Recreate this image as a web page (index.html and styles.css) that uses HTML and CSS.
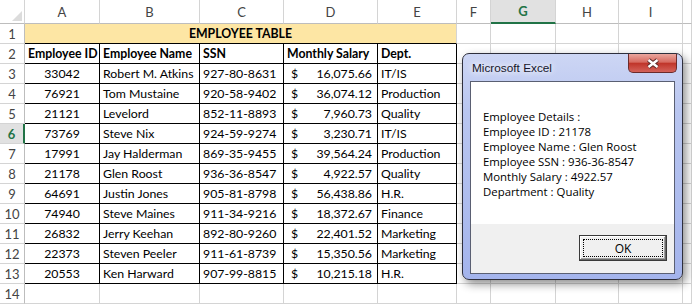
FILE: index.html
```html
<!DOCTYPE html>
<html lang="en">
<head>
    <meta charset="UTF-8">
    <title>Employee Table</title>
    <link rel="stylesheet" href="styles.css">
</head>
<body>

    <div class="sheet">
        <div class="row head-row">
            <div class="corner"><svg width="24" height="23" viewBox="0 0 24 23"><path d="M22 11 L22 21 L12 21 Z" fill="#dcdcdc"/></svg></div>
            <div>A</div><div>B</div><div>C</div><div>D</div><div>E</div>
            <div>F</div><div class="sel-col">G</div><div>H</div><div>I</div><div></div>
        </div>
        <div class="row">
            <div class="rh">1</div>
            <div class="title">EMPLOYEE TABLE</div>
            <div></div><div></div><div></div><div></div><div></div>
        </div>
        <div class="row data heading">
            <div class="rh">2</div>
            <div>Employee ID</div><div>Employee Name</div><div>SSN</div><div>Monthly Salary</div><div>Dept.</div>
            <div></div><div></div><div></div><div></div><div></div>
        </div>
        <div class="row data rec">
            <div class="rh">3</div>
            <div>33042</div><div>Robert M. Atkins</div><div>927-80-8631</div>
            <div class="amt"><span>$</span><span>16,075.66</span></div><div>IT/IS</div>
            <div></div><div></div><div></div><div></div><div></div>
        </div>
        <div class="row data rec">
            <div class="rh">4</div>
            <div>76921</div><div>Tom Mustaine</div><div>920-58-9402</div>
            <div class="amt"><span>$</span><span>36,074.12</span></div><div>Production</div>
            <div></div><div></div><div></div><div></div><div></div>
        </div>
        <div class="row data rec">
            <div class="rh">5</div>
            <div>21121</div><div>Levelord</div><div>852-11-8893</div>
            <div class="amt"><span>$</span><span>7,960.73</span></div><div>Quality</div>
            <div></div><div></div><div></div><div></div><div></div>
        </div>
        <div class="row data rec">
            <div class="rh sel-row">6</div>
            <div>73769</div><div>Steve Nix</div><div>924-59-9274</div>
            <div class="amt"><span>$</span><span>3,230.71</span></div><div>IT/IS</div>
            <div></div><div></div><div></div><div></div><div></div>
        </div>
        <div class="row data rec">
            <div class="rh">7</div>
            <div>17991</div><div>Jay Halderman</div><div>869-35-9455</div>
            <div class="amt"><span>$</span><span>39,564.24</span></div><div>Production</div>
            <div></div><div></div><div></div><div></div><div></div>
        </div>
        <div class="row data rec">
            <div class="rh">8</div>
            <div>21178</div><div>Glen Roost</div><div>936-36-8547</div>
            <div class="amt"><span>$</span><span>4,922.57</span></div><div>Quality</div>
            <div></div><div></div><div></div><div></div><div></div>
        </div>
        <div class="row data rec">
            <div class="rh">9</div>
            <div>64691</div><div>Justin Jones</div><div>905-81-8798</div>
            <div class="amt"><span>$</span><span>56,438.86</span></div><div>H.R.</div>
            <div></div><div></div><div></div><div></div><div></div>
        </div>
        <div class="row data rec">
            <div class="rh">10</div>
            <div>74940</div><div>Steve Maines</div><div>911-34-9216</div>
            <div class="amt"><span>$</span><span>18,372.67</span></div><div>Finance</div>
            <div></div><div></div><div></div><div></div><div></div>
        </div>
        <div class="row data rec">
            <div class="rh">11</div>
            <div>26832</div><div>Jerry Keehan</div><div>892-80-9260</div>
            <div class="amt"><span>$</span><span>22,401.52</span></div><div>Marketing</div>
            <div></div><div></div><div></div><div></div><div></div>
        </div>
        <div class="row data rec">
            <div class="rh">12</div>
            <div>22373</div><div>Steven Peeler</div><div>911-61-8739</div>
            <div class="amt"><span>$</span><span>15,350.56</span></div><div>Marketing</div>
            <div></div><div></div><div></div><div></div><div></div>
        </div>
        <div class="row data rec">
            <div class="rh">13</div>
            <div>20553</div><div>Ken Harward</div><div>907-99-8815</div>
            <div class="amt"><span>$</span><span>10,215.18</span></div><div>H.R.</div>
            <div></div><div></div><div></div><div></div><div></div>
        </div>
        <div class="row">
            <div class="rh">14</div>
            <div></div><div></div><div></div><div></div><div></div>
            <div></div><div></div><div></div><div></div><div></div>
        </div>
    </div>

    <div class="dialog">
        <div class="dlg-title">
            <span>Microsoft Excel</span>
            <div class="close-btn">
                <svg width="16" height="11" viewBox="0 0 16 11">
                    <path d="M3.5 2 L12.5 9 M12.5 2 L3.5 9" stroke="#5a2a2a" stroke-width="4.4"/>
                    <path d="M3.5 2 L12.5 9 M12.5 2 L3.5 9" stroke="#fff" stroke-width="2.4"/>
                </svg>
            </div>
        </div>
        <div class="dlg-panel">
            <div class="dlg-msg">
                <p>Employee Details :</p>
                <p>Employee ID : 21178</p>
                <p>Employee Name : Glen Roost</p>
                <p>Employee SSN : 936-36-8547</p>
                <p>Monthly Salary : 4922.57</p>
                <p>Department : Quality</p>
            </div>
            <div class="dlg-foot">
                <button class="ok-btn"><span>OK</span></button>
            </div>
        </div>
    </div>

</body>
</html>
```

FILE: styles.css
```css
* {
    box-sizing: border-box;
}
body {
    margin: 0;
    width: 692px;
    height: 304px;
    overflow: hidden;
    position: relative;
    background: #fff;
    font-family: Lato, "Liberation Sans", sans-serif;
    font-size: 12.3px;
    color: #000;
}
.sheet {
    display: flex;
    flex-direction: column;
}
.row {
    display: grid;
    grid-template-columns: 25px 75px 100px 84px 94px 79px 34px 65px 63px 64px 9px;
    height: 20px;
}
.row > div {
    border-right: 1px solid #d4d4d4;
    border-bottom: 1px solid #d4d4d4;
    line-height: 20px;
    padding: 0 3px;
    white-space: nowrap;
    overflow: hidden;
}
.head-row {
    height: 24px;
}
.head-row > div {
    text-align: center;
    color: #444;
    font-size: 13px;
    line-height: 24px;
    border-bottom-color: #bdbdbd;
}
.head-row > .corner {
    padding: 0;
    line-height: 0;
}
.row > .rh {
    text-align: center;
    color: #444;
    font-size: 13px;
    padding: 0;
    border-right-color: #bdbdbd;
}
.head-row > .sel-col {
    background: #e1e1e1;
    color: #217346;
    font-weight: bold;
    border-bottom: 2px solid #217346;
    line-height: 23px;
}
.row > .sel-row {
    background: #e1e1e1;
    color: #217346;
    font-weight: bold;
    border-right: 2px solid #217346;
}
.row > .title {
    grid-column: span 5;
    background: #fde6a4;
    font-weight: bold;
    text-align: center;
    border-bottom-color: #000;
}
.data > div:nth-child(n+2):nth-child(-n+6) {
    border-right-color: #000;
    border-bottom-color: #000;
}
.heading > div {
    font-weight: bold;
}
.heading > .rh {
    font-weight: normal;
}
.rec > div:nth-child(2) {
    text-align: center;
}
.row > .amt {
    display: flex;
    justify-content: space-between;
    padding: 0 5px 0 7px;
}

/* message box */
.dialog {
    position: absolute;
    left: 462px;
    top: 53px;
    width: 221px;
    height: 227px;
    border: 1px solid #2e2f3c;
    border-radius: 7px;
    background: linear-gradient(to bottom, #cdd6f4 0%, #b9c6f0 25%, #a4b4ec 100%);
    box-shadow: 3px 4px 10px rgba(0, 0, 0, 0.45);
    display: flex;
    flex-direction: column;
    font-family: "Liberation Sans", Arial, sans-serif;
    font-size: 11.8px;
}
.dlg-title {
    height: 27px;
    display: flex;
    justify-content: space-between;
    align-items: flex-start;
    padding-left: 9px;
}
.dlg-title span {
    margin-top: 7px;
    color: #16162a;
    text-shadow: 0 0 6px #fff, 0 0 10px #fff;
}
.close-btn {
    width: 49px;
    height: 19px;
    margin-right: 5px;
    border: 1px solid #6b2b2b;
    border-top: none;
    border-radius: 0 0 5px 5px;
    background: linear-gradient(to bottom, #eaa69e 0%, #d76a60 45%, #c0352a 52%, #d4625a 100%);
    display: flex;
    align-items: center;
    justify-content: center;
}
.dlg-panel {
    flex: 1;
    margin: 0 7px 5px;
    border: 1px solid #5a5f72;
    display: flex;
    flex-direction: column;
}
.dlg-msg {
    height: 142px;
    background: #fff;
    padding: 27px 0 0 12px;
    line-height: 15px;
    font-family: "Open Sans", sans-serif;
    font-size: 11.4px;
    color: #000;
}
.dlg-msg p {
    margin: 0;
}
.dlg-foot {
    flex: 1;
    background: #f0f0f0;
    display: flex;
    justify-content: flex-end;
    align-items: flex-start;
    padding: 11px 7px 0 0;
}
.ok-btn {
    width: 88px;
    height: 26px;
    padding: 4px;
    background: #f0f0f0;
    border: 1px solid #3a3a3a;
    box-shadow: inset -1px -1px 0 #6a6a6a, inset 1px 1px 0 #fff, inset -2px -2px 0 #a0a0a0;
    font-family: "Open Sans", sans-serif;
    font-size: 12px;
    color: #000;
}
.ok-btn span {
    display: flex;
    height: 100%;
    align-items: center;
    justify-content: center;
    outline: 1px dotted #000;
}
```
